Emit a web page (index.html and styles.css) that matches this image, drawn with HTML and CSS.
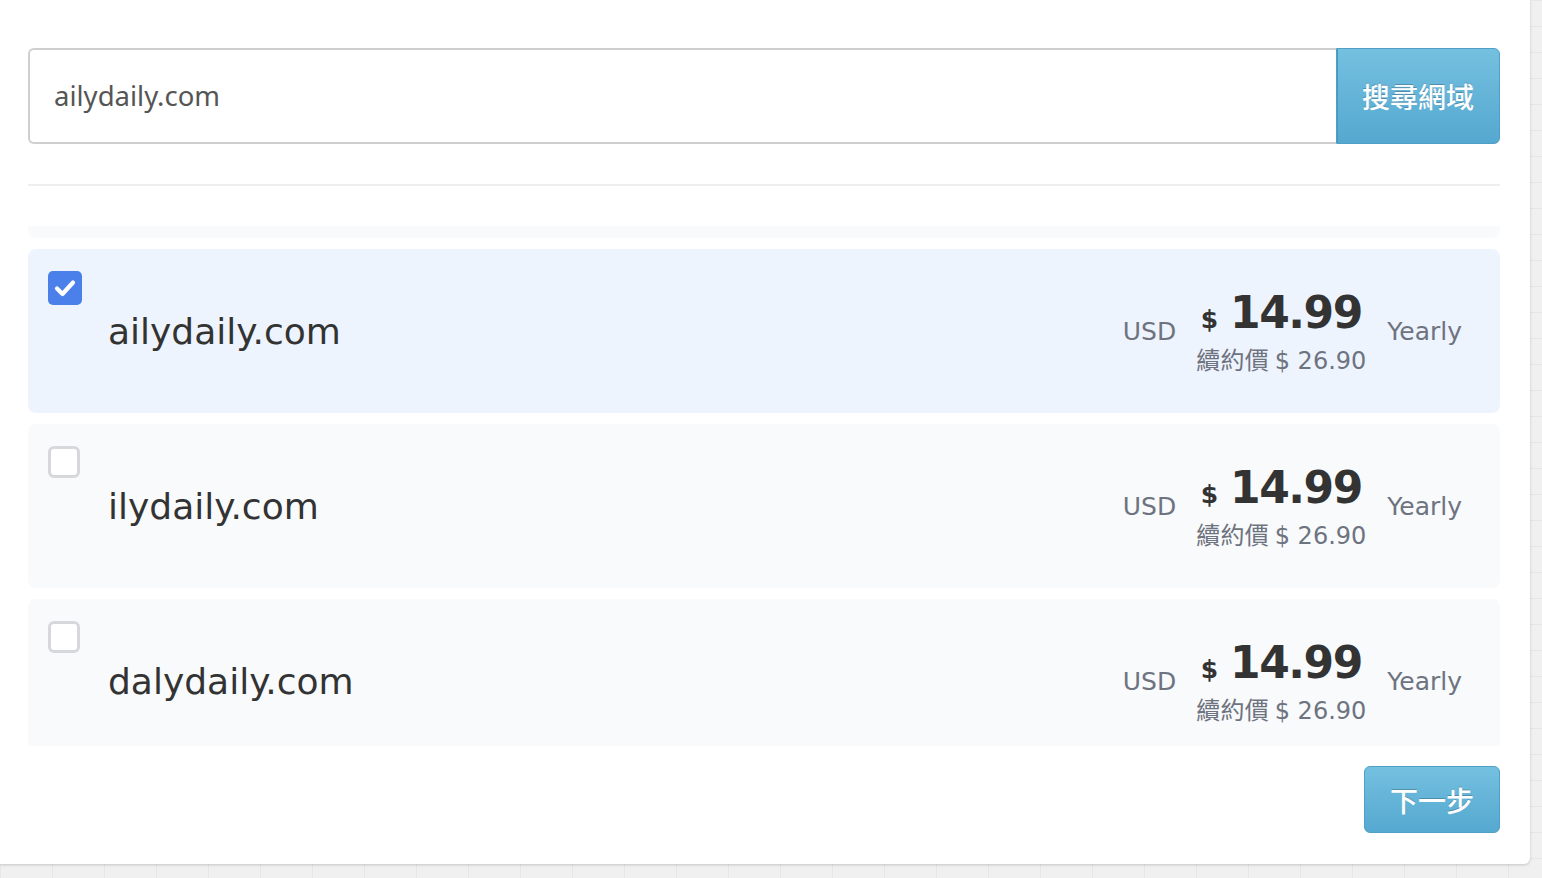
FILE: index.html
```html
<!DOCTYPE html>
<html lang="zh-Hant">
<head>
<meta charset="utf-8">
<title>搜尋網域</title>
<link rel="stylesheet" href="styles.css">
</head>
<body>
<div class="card">
  <div class="search">
    <div class="search-input">ailydaily.com</div>
    <button class="btn btn-search">搜尋網域</button>
  </div>
  <div class="divider"></div>
  <div class="list-viewport">
    <div class="list">
      <div class="row peek"></div>
      <div class="row selected">
        <span class="check checked"><svg viewBox="0 0 34 34" width="34" height="34"><path d="M9 17.5 L14.5 23 L25 11.5" fill="none" stroke="#fff" stroke-width="4.2" stroke-linecap="round" stroke-linejoin="round"/></svg></span>
        <div class="domain">ailydaily.com</div>
        <div class="price">
          <span class="cur">USD</span>
          <div class="amount">
            <div class="main"><span class="sym">$</span><span class="num">14.99</span></div>
            <div class="renew">續約價 <span class="latin">$ 26.90</span></div>
          </div>
          <span class="period">Yearly</span>
        </div>
      </div>
      <div class="row">
        <span class="check"></span>
        <div class="domain">ilydaily.com</div>
        <div class="price">
          <span class="cur">USD</span>
          <div class="amount">
            <div class="main"><span class="sym">$</span><span class="num">14.99</span></div>
            <div class="renew">續約價 <span class="latin">$ 26.90</span></div>
          </div>
          <span class="period">Yearly</span>
        </div>
      </div>
      <div class="row">
        <span class="check"></span>
        <div class="domain">dalydaily.com</div>
        <div class="price">
          <span class="cur">USD</span>
          <div class="amount">
            <div class="main"><span class="sym">$</span><span class="num">14.99</span></div>
            <div class="renew">續約價 <span class="latin">$ 26.90</span></div>
          </div>
          <span class="period">Yearly</span>
        </div>
      </div>
    </div>
  </div>
  <div class="actions">
    <button class="btn btn-next">下一步</button>
  </div>
</div>
</body>
</html>
```

FILE: styles.css
```css
html, body {
  margin: 0;
  padding: 0;
}
body {
  width: 1542px;
  height: 878px;
  overflow: hidden;
  background-color: #f0f0f0;
  background-image:
    linear-gradient(to right, #e6e6e6 1px, transparent 1px),
    linear-gradient(to bottom, #e6e6e6 1px, transparent 1px);
  background-size: 52px 26px;
  font-family: "DejaVu Sans", "Noto Sans CJK TC", sans-serif;
}
.card {
  width: 1530px;
  height: 864px;
  box-sizing: border-box;
  background: #fff;
  border-radius: 0 0 6px 0;
  box-shadow: 0 1px 3px rgba(0, 0, 0, 0.18);
  padding: 48px 30px 0 28px;
}
.search {
  display: flex;
  height: 96px;
}
.search-input {
  flex: 1;
  box-sizing: border-box;
  border: 2px solid #cfcfcf;
  border-right: none;
  border-radius: 6px 0 0 6px;
  padding: 0 24px 2px;
  display: flex;
  align-items: center;
  font-family: "Noto Sans", sans-serif;
  font-size: 27.5px;
  color: #555;
}
.btn {
  border: 1px solid #4f9fc7;
  background: linear-gradient(to bottom, #74c0e0, #55a8d0);
  color: #fff;
  font-family: "Noto Sans CJK TC", sans-serif;
  font-size: 28px;
  font-weight: 500;
  text-shadow: 0 -1px 0 rgba(0, 0, 0, 0.22);
  padding: 0;
  cursor: pointer;
}
.btn-search {
  width: 164px;
  border-radius: 0 6px 6px 0;
  box-shadow: inset 1px 0 0 #4c97bd;
}
.divider {
  height: 2px;
  background: #eeeeee;
  margin: 40px 0 40px;
}
.list-viewport {
  height: 520px;
  overflow: hidden;
}
.list {
  display: flex;
  flex-direction: column;
  gap: 11px;
  margin-top: -152px;
}
.row {
  position: relative;
  height: 164px;
  flex: none;
  border-radius: 8px;
  background: #f8fafc;
  display: flex;
  align-items: center;
  padding: 0 38px 0 80px;
}
.row.selected {
  background: #eef4fe;
}
.check {
  position: absolute;
  left: 20px;
  top: 22px;
  width: 32px;
  height: 32px;
  box-sizing: border-box;
  border: 3px solid #d6d8db;
  border-radius: 6px;
  background: #fff;
}
.check.checked {
  width: 34px;
  height: 34px;
  border: none;
  background: #4b80ea;
  border-radius: 5px;
}
.check svg {
  display: block;
}
.domain {
  flex: 1;
  font-size: 36px;
  color: #333;
  padding-top: 0;
}
.price {
  display: flex;
  align-items: center;
  color: #6e7380;
}
.cur, .period {
  font-size: 25px;
  padding-top: 0;
}
.cur {
  margin-left: 0;
}
.amount {
  display: flex;
  flex-direction: column;
  align-items: center;
  margin: 0 21px 0 20px;
  padding-top: 6px;
}
.main {
  display: flex;
  align-items: baseline;
  color: #333;
  font-weight: bold;
  line-height: 1;
}
.sym {
  font-size: 25px;
  margin-right: 12px;
}
.num {
  font-size: 44px;
  letter-spacing: -1.5px;
}
.renew {
  font-family: "Noto Sans CJK TC", sans-serif;
  font-size: 24px;
  line-height: 1.3;
  margin-top: 8px;
  letter-spacing: 0.3px;
}
.renew .latin {
  font-family: "DejaVu Sans", sans-serif;
  letter-spacing: 0;
}
.actions {
  display: flex;
  justify-content: flex-end;
  margin-top: 20px;
}
.btn-next {
  width: 136px;
  height: 67px;
  border-radius: 6px;
}
```
